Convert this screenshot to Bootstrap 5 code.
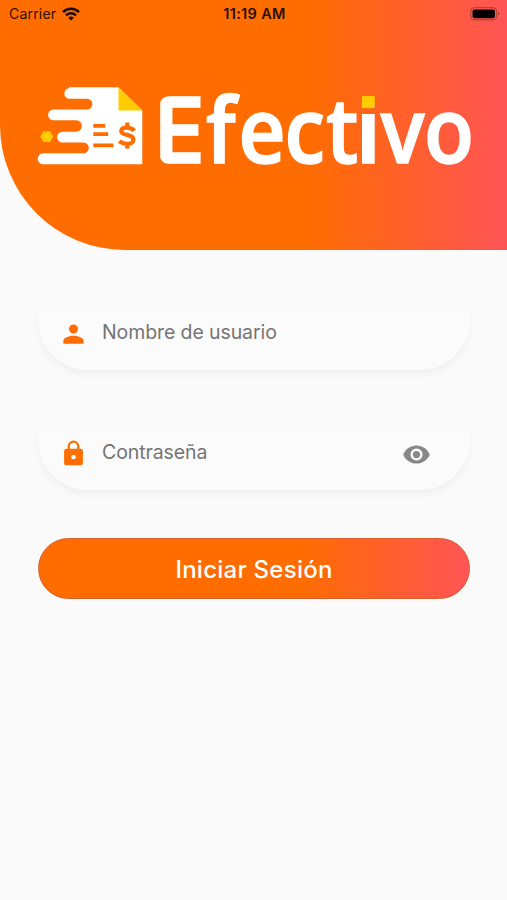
<!DOCTYPE html>
<html lang="es">
<head>
<meta charset="utf-8">
<meta name="viewport" content="width=device-width, initial-scale=1">
<title>Efectivo</title>
<link href="https://cdn.jsdelivr.net/npm/bootstrap@5.3.0/dist/css/bootstrap.min.css" rel="stylesheet">
<style>
body{background:#fafafa;font-family:Inter,"Liberation Sans",sans-serif;min-height:900px;overflow:hidden}
.hero{height:250px;border-bottom-left-radius:125px;background:linear-gradient(90deg,#ff6d00 60%,#ff5456)}
.status{height:27px;padding:0 7px 0 9px;font-size:14px;color:#2b1000}
.status>div{flex:1 1 0}
.carrier{letter-spacing:.2px}
.clock{font-weight:600;font-size:14.5px;letter-spacing:.35px}
.brand{display:block;margin:53px 0 0 30px;overflow:visible}
.brand text{font-family:"Open Sans","Noto Sans",sans-serif;font-weight:600}
.brand .cap{font-family:Inter,sans-serif}
.brand .dotted{font-family:"Liberation Sans",sans-serif;font-weight:700}
.login{padding:60px 37px 0 38px}
.pill{height:60px;border-radius:0 0 50px 50px;margin-bottom:60px;padding:0 39px 0 22px;background:#fbfbfb;box-shadow:0 5px 6px #0000000a}
.pill input,.pill input:focus{background:none;border:0;box-shadow:none;font-size:19.5px;letter-spacing:-.1px;padding:0;margin:-17px 0 0 16px;height:30px;min-width:0}
.pill input::placeholder{color:#757575;opacity:1}
.pill svg{flex:none;margin-top:-12px}
.pill svg:first-child{margin-left:-.5px;margin-right:-.5px}
.pill svg:first-child{margin-top:-13px}
.enter{height:61px;margin-top:-12px;padding-top:2px!important;font-size:24px;font-weight:500;letter-spacing:.25px;color:#fff;border:1px solid #d95f2b;background:linear-gradient(90deg,#ff6d00 60%,#ff5456) border-box}
</style>
</head>
<body>
<header class="hero">
  <div class="status d-flex align-items-center">
    <div class="d-flex align-items-center"><span class="carrier">Carrier</span>
      <svg class="ms-1" width="21" height="14" viewBox="-1.500 0 20 14" fill="none" stroke="#1c0a00" stroke-width="2.5"><path d="M1 5.100a11.400 11.400 0 0 1 16 0M4 8.300a7.200 7.200 0 0 1 10 0"/><path d="M6.200 10.700a4.100 4.100 0 0 1 5.600 0L9 13.500z" fill="#1c0a00" stroke="none"/></svg>
    </div>
    <span class="clock">11:19 AM</span>
    <div class="d-flex justify-content-end">
      <svg width="30" height="14" viewBox="0 0 30 14"><rect x=".7" y=".7" width="26" height="12.2" rx="3.6" fill="none" stroke="#a83f30"/><rect x="2.5" y="2.4" width="22.4" height="8.8" rx="2" fill="#080000"/><path d="M28 4.800q2 2 0 4z" fill="#8f3529"/></svg>
    </div>
  </div>
  <svg class="brand" width="450" height="95" viewBox="30 80 450 95" role="img" aria-label="Efectivo">
    <defs><linearGradient id="dot" gradientUnits="userSpaceOnUse" x1="0" y1="-60" x2="0" y2="-50"><stop offset=".28" stop-color="#fc0"/><stop offset=".28" stop-color="#fff"/></linearGradient></defs>
    <path fill="#fff" d="M69 87.300H118.500L142.300 110.500V164.300H43.200a5.400 5.400 0 0 1 0-11H83.400a5.400 5.400 0 0 0 0-10.800H62.500a5.300 5.300 0 0 1 0-10.800H76.200a5.700 5.700 0 0 0 0-11.400H53.500a5.400 5.400 0 0 1 0-10.800H87a5.300 5.300 0 0 0 0-10.700H69a5.300 5.300 0 0 1 0-10.500z"/>
    <path fill="#fc0" d="M118.500 87.300L142.300 110.500H118.500zM43.500 131.200h6.500l3.200 5.300-3.200 5.400h-6.500l-3.200-5.400z"/>
    <path fill="#ff6d00" d="M93.300 124h11.900v3.700H93.300zM93.300 132.300h14.900v3.800H93.300zM93.300 143.400h20.100v3.900H93.300z"/>
    <path d="M134.200 130.700C131.500 127.200 122 125.900 121.300 130.700C120.700 136.400 134.300 133.300 133.300 140C132.500 145.500 123 144.400 119.400 141M127.300 122.500V128M127.300 143V148.500" stroke="#ff6d00" stroke-width="4.2" fill="none"/>
    <text transform="translate(0 163) scale(.9 1)" font-size="91" fill="#fff" stroke="#fff" stroke-width="1.6" x="172.300 229 265 316 362.300 396.800 423 471"><tspan class="cap">E</tspan>fect<tspan class="dotted" fill="url(#dot)" stroke="url(#dot)">i</tspan>vo</text>
    <!-- rounded outer corners of the E -->
    <path fill="#ff6d00" d="M157 94H170V96Q159.200 96.500 159.200 108H157zM157 166H170V164.200Q159.200 163.500 159.200 152H157z"/>
    <rect x="362.300" y="96.300" width="11.800" height="11.800" fill="#fc0"/>
  </svg>
</header>
<main class="login">
  <form>
    <label class="pill d-flex align-items-center">
      <svg width="27" height="27" viewBox="0 0 24 24" fill="#ff6d00"><path d="M12 12a4 4 0 1 0 0-8 4 4 0 0 0 0 8zm0 2c-3 0-9 1.400-9 4.400V21h18v-2.600c0-3-6-4.400-9-4.400z"/></svg>
      <input class="form-control" type="text" placeholder="Nombre de usuario">
    </label>
    <label class="pill d-flex align-items-center">
      <svg width="27" height="27" viewBox="0.500 0.500 23 23" fill="#ff6d00"><path d="M18 8h-1V6A5 5 0 0 0 7 6v2H6a2 2 0 0 0-2 2v10c0 1.100.9 2 2 2h12a2 2 0 0 0 2-2V10a2 2 0 0 0-2-2zm-6 9a2 2 0 1 1 0-4 2 2 0 0 1 0 4zM15.100 8H8.900V6a3.100 3.100 0 0 1 6.200 0z"/></svg>
      <input class="form-control" type="password" placeholder="Contraseña">
      <svg width="29" height="29" viewBox="0 0 24 24" fill="#888"><path d="M12 4.500C7 4.500 2.700 7.600 1 12c1.700 4.400 6 7.500 11 7.500s9.300-3.100 11-7.500C21.300 7.600 17 4.500 12 4.500zM12 17a5 5 0 1 1 0-10 5 5 0 0 1 0 10zm0-8a3 3 0 1 0 0 6 3 3 0 0 0 0-6z"/></svg>
    </label>
    <button class="enter btn rounded-pill w-100 p-0" type="button">Iniciar Sesión</button>
  </form>
</main>
<script src="https://cdn.jsdelivr.net/npm/bootstrap@5.3.0/dist/js/bootstrap.bundle.min.js"></script>
</body>
</html>
